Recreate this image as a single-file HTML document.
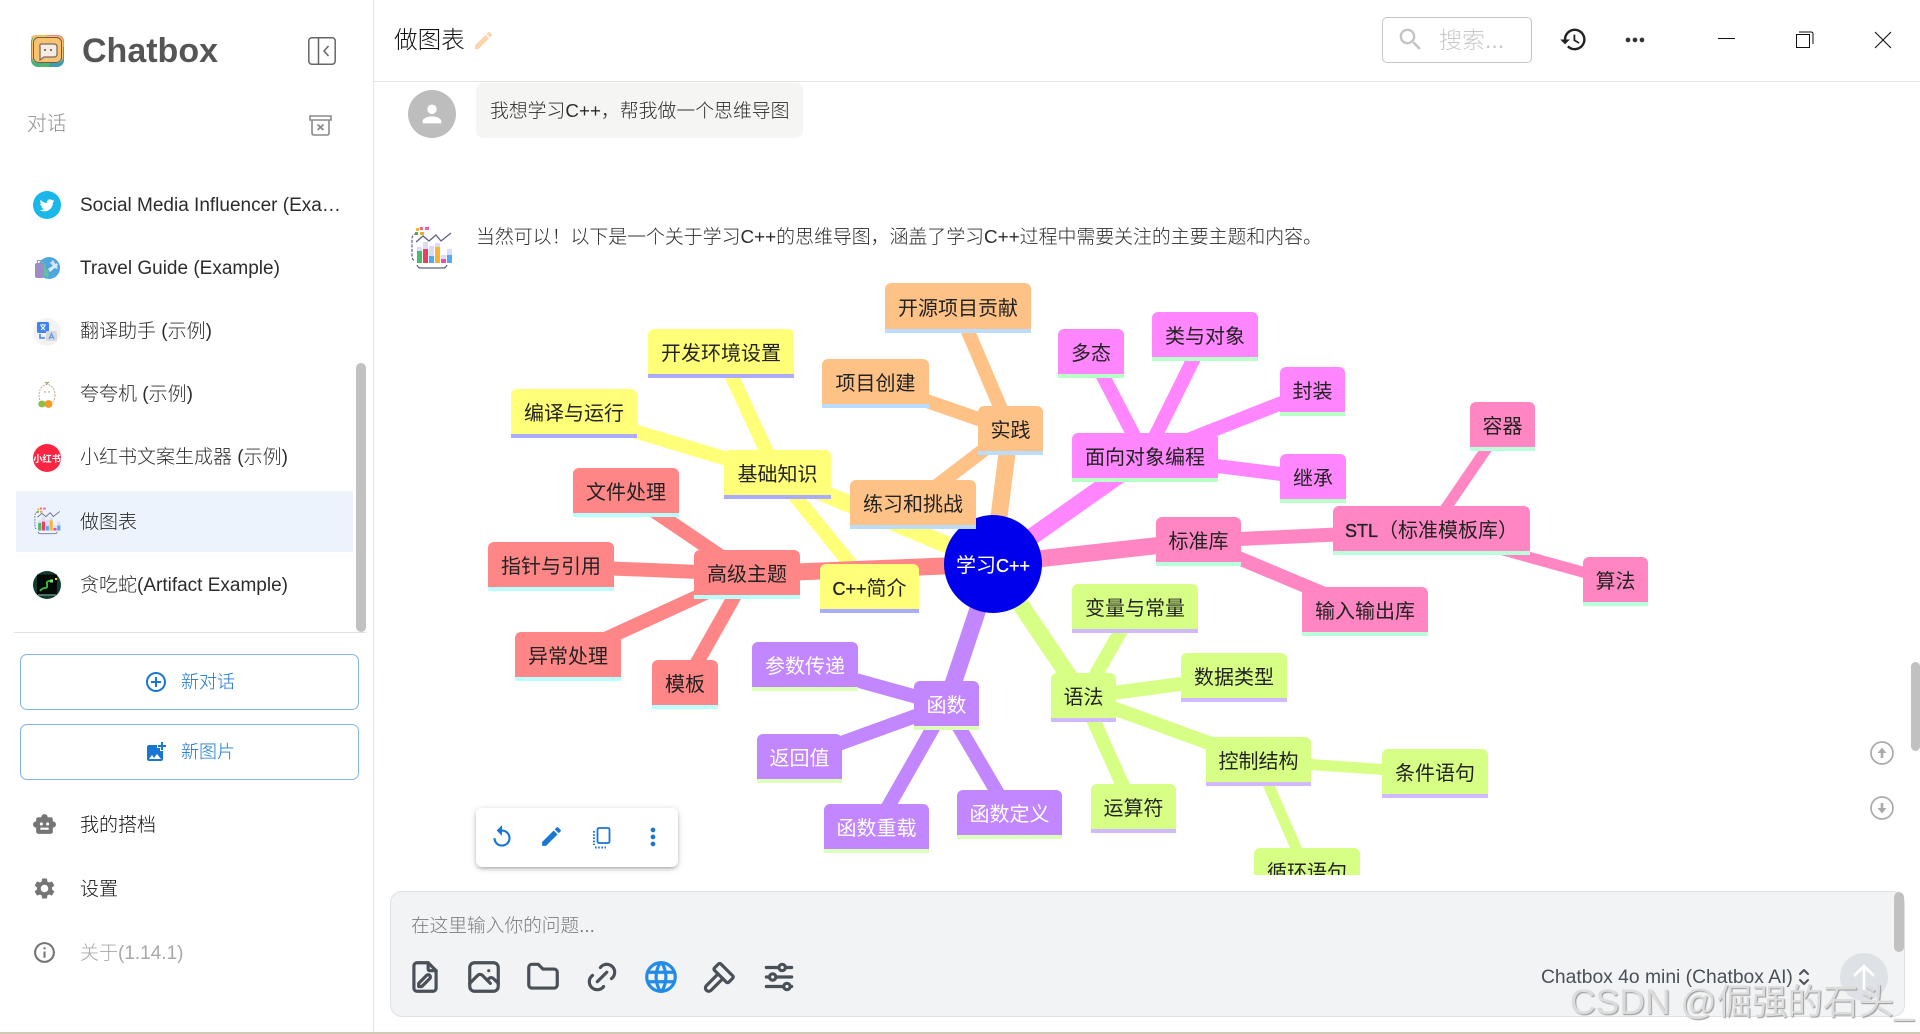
<!DOCTYPE html>
<html lang="zh">
<head>
<meta charset="utf-8">
<title>Chatbox</title>
<style>
*{box-sizing:border-box;margin:0;padding:0}
html,body{width:1920px;height:1034px;overflow:hidden;background:#fff}
body{font-family:"Liberation Sans","Noto Sans CJK SC",sans-serif;color:#333;position:relative}
.a{position:absolute}
.t{position:absolute;white-space:nowrap;font-size:19px;line-height:26px;color:#2c2c2c;font-weight:300}
svg{display:block;overflow:visible}
.sb{position:absolute;background:#c1c1c1;border-radius:5px}
.btn{position:absolute;left:20px;width:339px;height:56px;border:1.3px solid #82b4e6;border-radius:7px}
/* mindmap */
#mm{position:absolute;left:0;top:0;width:1920px;height:875px;overflow:hidden}
.n{position:absolute;border-radius:6px 6px 0 0;text-align:center;font-size:20px;color:#222;white-space:nowrap;border-bottom:4px solid;display:flex;align-items:center;justify-content:center;line-height:26px;padding-top:5px}
.n span{font-size:18px;-webkit-text-stroke:.35px #222}
.y{background:#ffff78;border-color:#acacff}
.o{background:#ffc286;border-color:#b9dcff}
.r{background:#ff8686;border-color:#b9ffff}
.m{background:#ff86ff;border-color:#b9ffc8}
.p{background:#ff86c2;border-color:#b9ffdc}
.g{background:#d7ff86;border-color:#d0b9ff}
.v{background:#c286ff;border-color:#dcffb9;color:#fff}
.e line{stroke-linecap:butt}
</style>
</head>
<body>
<svg width="0" height="0" style="position:absolute">
<symbol id="chart" viewBox="0 0 44 44">
<path d="M8 8 Q3 8 3 13 V30 Q3 34 6 35" fill="none" stroke="#5c5f8a" stroke-width="1.2" stroke-dasharray="3 1.5"/>
<rect x="7" y="2" width="3" height="3" fill="#f7b733"/><rect x="11" y="1" width="3" height="3" fill="#f06292"/><rect x="16" y="1" width="4" height="3" fill="#ec5fb3"/><rect x="6" y="6" width="3" height="3" fill="#4caf50"/><rect x="11" y="6" width="4" height="3" fill="#f9a825"/>
<path d="M7 16 L14 10 L20 15 L27 9 L32 15 L42 7" fill="none" stroke="#5c5f8a" stroke-width="1.3"/>
<rect x="8" y="25" width="5" height="12" fill="#4bb870"/><rect x="8" y="21" width="5" height="4" fill="#dcdcfa"/>
<rect x="14" y="16" width="5" height="7" fill="#dcdcfa"/><rect x="14" y="23" width="5" height="14" fill="#e8415f"/>
<rect x="20" y="20" width="5" height="10" fill="#dcdcfa"/><rect x="20" y="30" width="5" height="7" fill="#54aaf2"/>
<rect x="26" y="17" width="5" height="4" fill="#dcdcfa"/><rect x="26" y="21" width="5" height="16" fill="#f9b233"/>
<rect x="32" y="29" width="5" height="4" fill="#dcdcfa"/><rect x="32" y="33" width="5" height="4" fill="#f04da0"/>
<rect x="38" y="23" width="5" height="6" fill="#dcdcfa"/><rect x="38" y="29" width="5" height="8" fill="#54aaf2"/>
<path d="M8 39 Q9 42 12 42 H34 Q37 42 38 39" fill="none" stroke="#5c5f8a" stroke-width="1.2"/>
</symbol>
</svg>

<!-- sidebar -->
<div class="a" style="left:373px;top:0;width:1px;height:1034px;background:#e4e4e4"></div>

<svg class="a" style="left:31px;top:35px" width="33" height="32" viewBox="0 0 33 32">
<defs><linearGradient id="lb" x1="0" x2="1" y1="0" y2="0"><stop offset="0" stop-color="#43b27f"/><stop offset=".55" stop-color="#57b36c"/><stop offset=".56" stop-color="#3a9db0"/><stop offset="1" stop-color="#3a9db0"/></linearGradient></defs>
<rect width="33" height="32" rx="7" fill="url(#lb)"/>
<path d="M7 0 H17 V3 H0 Q0 0 7 0Z" fill="#f6b95f"/>
<path d="M16 0 H26 Q33 0 33 7 V12 H16Z" fill="#f0896a"/>
<rect x="0" y="0" width="31" height="27" rx="6" fill="#f7c36f" transform="translate(1 1)"/>
<rect x="2.5" y="2.5" width="28" height="25" rx="5" fill="#f7c36f" stroke="#6e5a52" stroke-width="1"/>
<path d="M11 9 H23 Q26 9 26 12 V19 Q26 22 23 22 H13 L9 25 V12 Q8 9 11 9Z" fill="#f7ece2" stroke="#7b6a66" stroke-width="1.3"/>
<circle cx="14" cy="15" r="1.1" fill="#7b6a66"/><circle cx="20" cy="15" r="1.1" fill="#7b6a66"/>
</svg>
<div class="t" style="left:82px;top:31px;font-size:34px;line-height:40px;font-weight:700;color:#555">Chatbox</div>
<svg class="a" style="left:308px;top:37px" width="28" height="28" viewBox="0 0 28 28" fill="none" stroke="#666" stroke-width="1.5"><rect x=".8" y=".8" width="26.4" height="26.4" rx="3"/><path d="M10.5 1V27"/><path d="M20.5 9 L16 14 L20.5 19"/></svg>

<div class="t" style="left:27px;top:111px;font-size:19.8px;color:#8f8f8f">对话</div>
<svg class="a" style="left:309px;top:115px" width="23" height="21" viewBox="0 0 23 21" fill="none" stroke="#8a8a8a" stroke-width="1.6"><path d="M1 1 H22 V5 H1Z"/><path d="M3 5 V18 Q3 20 5 20 H18 Q20 20 20 18 V5"/><path d="M8.5 9.5 L14.5 15 M14.5 9.5 L8.5 15" stroke-width="1.8"/></svg>

<!-- list -->
<div class="a" style="left:16px;top:491px;width:337px;height:61px;background:#ecf3fc"></div>
<svg class="a" style="left:33px;top:190.5px" width="28" height="28" viewBox="0 0 28 28"><circle cx="14" cy="14" r="14" fill="#1ab7ea"/><g transform="translate(5.5 5.5) scale(.71)"><path fill="#fff" d="M22.46,6C21.69,6.35 20.86,6.58 20,6.69C20.88,6.16 21.56,5.32 21.88,4.31C21.05,4.81 20.13,5.16 19.16,5.36C18.37,4.5 17.26,4 16,4C13.65,4 11.73,5.92 11.73,8.29C11.73,8.63 11.77,8.96 11.84,9.27C8.28,9.09 5.11,7.38 3,4.79C2.63,5.42 2.42,6.16 2.42,6.94C2.42,8.43 3.17,9.75 4.33,10.5C3.62,10.5 2.96,10.3 2.38,10C2.38,10 2.38,10 2.38,10.03C2.38,12.11 3.86,13.85 5.82,14.24C5.46,14.34 5.08,14.39 4.69,14.39C4.42,14.39 4.15,14.36 3.89,14.31C4.43,16 6,17.26 7.89,17.29C6.43,18.44 4.58,19.13 2.56,19.13C2.22,19.13 1.88,19.11 1.54,19.07C3.44,20.29 5.7,21 8.12,21C16,21 20.33,14.46 20.33,8.79C20.33,8.6 20.33,8.42 20.32,8.23C21.16,7.63 21.88,6.87 22.46,6Z"/></g></svg>
<div class="t" style="left:80px;top:193px;width:263px;overflow:hidden;text-overflow:ellipsis">Social Media Influencer (Example)</div>

<svg class="a" style="left:33px;top:254px" width="28" height="28" viewBox="0 0 28 28"><circle cx="16" cy="14" r="11" fill="#4fa6dc"/><path d="M9 7 Q14 10 12 14 Q17 17 15 24 Q8 21 6 14Z" fill="#62c0a6"/><path d="M20 6 L25 14 L23 15 L17 9Z" fill="#cfe0fa"/><path d="M15 15 L24 9 L25 11 L17 18Z" fill="#dfe9fc"/><rect x="2" y="9" width="9" height="15" rx="2" fill="#9d8cc6"/><rect x="4.5" y="6.5" width="4" height="3" fill="none" stroke="#9d8cc6"/></svg>
<div class="t" style="left:80px;top:256px">Travel Guide (Example)</div>

<svg class="a" style="left:33px;top:317.5px" width="28" height="28" viewBox="0 0 28 28"><circle cx="14" cy="14" r="14" fill="#f3f3f5"/><rect x="4" y="4" width="12" height="11" rx="1.5" fill="#3f83f0"/><path d="M7 7 H13 M10 6 V7 M8 12 L12 8 M8 8 L12 12" stroke="#fff" stroke-width="1" fill="none"/><rect x="13" y="13" width="11" height="10" rx="1.5" fill="#d9d9dd"/><path d="M16 21 L18.5 15.5 L21 21 M17 19.5 H20" stroke="#5b9bee" stroke-width="1.2" fill="none"/><path d="M7 16 V20 H12" stroke="#3f83f0" stroke-width="1.6" fill="none"/></svg>
<div class="t" style="left:80px;top:319px">翻译助手 (示例)</div>

<svg class="a" style="left:33px;top:381px" width="28" height="28" viewBox="0 0 28 28"><ellipse cx="14" cy="14" rx="8" ry="10.5" fill="#fff" stroke="#b8a48c" stroke-width=".9" stroke-dasharray="2 1"/><path d="M14 3 V1 M12 1 L14 2.5 L16 1" stroke="#8aa35c" stroke-width="1" fill="none"/><circle cx="12" cy="11" r=".7" fill="#9a8370"/><circle cx="16" cy="11" r=".7" fill="#9a8370"/><ellipse cx="9" cy="23" rx="3.8" ry="3.4" fill="#88bf4a"/><circle cx="15.5" cy="23" r="3.9" fill="#f59a23"/></svg>
<div class="t" style="left:80px;top:382px">夸夸机 (示例)</div>

<svg class="a" style="left:33px;top:444px" width="28" height="28" viewBox="0 0 28 28"><circle cx="14" cy="14" r="14" fill="#ff2442"/><text x="14" y="17.8" text-anchor="middle" font-size="9.2" font-weight="700" fill="#fff" font-family="'Noto Sans CJK SC',sans-serif">小红书</text></svg>
<div class="t" style="left:80px;top:445px">小红书文案生成器 (示例)</div>

<svg class="a" style="left:33px;top:507px" width="28" height="28"><use href="#chart" width="28" height="28"/></svg>
<div class="t" style="left:80px;top:510px">做图表</div>

<svg class="a" style="left:33px;top:571px" width="28" height="28" viewBox="0 0 28 28"><circle cx="14" cy="14" r="14" fill="#123b33"/><rect x="4" y="3.5" width="20" height="20" fill="#050a08"/><path d="M7 20 Q9 17 12 17 Q15 17 14 13 Q13 10 17 10" fill="none" stroke="#3bc43b" stroke-width="1.8"/><rect x="17" y="8.5" width="3" height="3" fill="#7be37b"/><rect x="22" y="7" width="2" height="2" fill="#e6e64c"/><path d="M5 24 H23" stroke="#5e8f7e" stroke-width="1.5"/></svg>
<div class="t" style="left:80px;top:573px">贪吃蛇(Artifact Example)</div>

<div class="sb" style="left:356px;top:363px;width:10px;height:269px"></div>
<div class="a" style="left:14px;top:632px;width:352px;height:1px;background:#e0e0e0"></div>

<div class="btn" style="top:654px"></div>
<svg class="a" style="left:144px;top:670px" width="24" height="24" viewBox="0 0 24 24"><path fill="#1976d2" d="M13 7h-2v4H7v2h4v4h2v-4h4v-2h-4V7zm-1-5C6.48 2 2 6.48 2 12s4.48 10 10 10 10-4.48 10-10S17.52 2 12 2zm0 18c-4.41 0-8-3.59-8-8s3.59-8 8-8 8 3.59 8 8-3.59 8-8 8z"/></svg>
<div class="t" style="left:181px;top:669px;font-size:18px;color:#1976d2">新对话</div>

<div class="btn" style="top:724px"></div>
<svg class="a" style="left:144px;top:740px" width="24" height="24" viewBox="0 0 24 24"><path fill="#1976d2" d="M19 7v2.99s-1.99.01-2 0V7h-3s.01-1.99 0-2h3V2h2v3h3v2h-3zm-3 4V8h-3V5H5c-1.1 0-2 .9-2 2v12c0 1.1.9 2 2 2h12c1.1 0 2-.9 2-2v-8h-3zM5 19l3-4 2 3 3-4 4 5H5z"/></svg>
<div class="t" style="left:181px;top:739px;font-size:18px;color:#1976d2">新图片</div>

<svg class="a" style="left:32px;top:811.5px" width="25" height="25" viewBox="0 0 24 24"><path fill="#757575" d="M20 9V7c0-1.1-.9-2-2-2h-3c0-1.66-1.34-3-3-3S9 3.34 9 5H6c-1.1 0-2 .9-2 2v2c-1.66 0-3 1.34-3 3s1.34 3 3 3v4c0 1.1.9 2 2 2h12c1.1 0 2-.9 2-2v-4c1.66 0 3-1.34 3-3s-1.34-3-3-3zM7.5 11.5c0-.83.67-1.5 1.5-1.5s1.5.67 1.5 1.5S9.83 13 9 13s-1.5-.67-1.5-1.5zM16 17H8v-2h8v2zm-1-4c-.83 0-1.5-.67-1.5-1.5S14.17 10 15 10s1.5.67 1.5 1.5S15.83 13 15 13z"/></svg>
<div class="t" style="left:80px;top:813px;color:#111">我的搭档</div>
<svg class="a" style="left:32px;top:876px" width="25" height="25" viewBox="0 0 24 24"><path fill="#757575" d="M19.14 12.94c.04-.3.06-.61.06-.94 0-.32-.02-.64-.07-.94l2.03-1.58c.18-.14.23-.41.12-.61l-1.92-3.32c-.12-.22-.37-.29-.59-.22l-2.39.96c-.5-.38-1.03-.7-1.62-.94l-.36-2.54c-.04-.24-.24-.41-.48-.41h-3.84c-.24 0-.43.17-.47.41l-.36 2.54c-.59.24-1.13.57-1.62.94l-2.39-.96c-.22-.08-.47 0-.59.22L2.74 8.87c-.12.21-.08.47.12.61l2.03 1.58c-.05.3-.09.63-.09.94s.02.64.07.94l-2.03 1.58c-.18.14-.23.41-.12.61l1.92 3.32c.12.22.37.29.59.22l2.39-.96c.5.38 1.03.7 1.62.94l.36 2.54c.05.24.24.41.48.41h3.84c.24 0 .44-.17.47-.41l.36-2.54c.59-.24 1.13-.56 1.62-.94l2.39.96c.22.08.47 0 .59-.22l1.92-3.32c.12-.22.07-.47-.12-.61l-2.01-1.58zM12 15.6c-1.98 0-3.6-1.62-3.6-3.6s1.62-3.6 3.6-3.6 3.6 1.62 3.6 3.6-1.62 3.6-3.6 3.6z"/></svg>
<div class="t" style="left:80px;top:877px;color:#111">设置</div>
<svg class="a" style="left:32px;top:940px" width="25" height="25" viewBox="0 0 24 24"><path fill="#757575" d="M11 7h2v2h-2zm0 4h2v6h-2zm1-9C6.48 2 2 6.48 2 12s4.48 10 10 10 10-4.48 10-10S17.52 2 12 2zm0 18c-4.41 0-8-3.59-8-8s3.59-8 8-8 8 3.59 8 8-3.59 8-8 8z"/></svg>
<div class="t" style="left:80px;top:941px;color:#a8a8a8">关于(1.14.1)</div>

<!-- header -->
<div class="a" style="left:374px;top:81px;width:1546px;height:1px;background:#e4e4e4"></div>
<div class="t" style="left:394px;top:25px;font-size:23.6px;line-height:32px;color:#111">做图表</div>
<svg class="a" style="left:472px;top:29px" width="23" height="23" viewBox="0 0 24 24"><path fill="#fbd4ae" d="M3 17.25V21h3.75L17.81 9.94l-3.75-3.75L3 17.25zM20.71 7.04c.39-.39.39-1.02 0-1.41l-2.34-2.34a.9959.9959 0 00-1.41 0l-1.83 1.83 3.75 3.75 1.83-1.83z"/></svg>
<div class="a" style="left:1382px;top:17px;width:150px;height:46px;border:1.3px solid #c4c4c4;border-radius:5px"></div>
<svg class="a" style="left:1396px;top:25px" width="29" height="29" viewBox="0 0 24 24"><path fill="#c4c4c4" d="M15.5 14h-.79l-.28-.27C15.41 12.59 16 11.11 16 9.5 16 5.91 13.09 3 9.5 3S3 5.91 3 9.5 5.91 16 9.5 16c1.61 0 3.09-.59 4.23-1.57l.27.28v.79l5 4.99L20.49 19l-4.99-5zm-6 0C7.01 14 5 11.99 5 9.5S7.01 5 9.5 5 14 7.01 14 9.5 11.99 14 9.5 14z"/></svg>
<div class="t" style="left:1439px;top:24px;font-size:23px;line-height:32px;color:#c8c8c8">搜索...</div>
<svg class="a" style="left:1559px;top:25px" width="29" height="29" viewBox="0 0 24 24"><path fill="#222" d="M13 3c-4.97 0-9 4.03-9 9H1l3.89 3.89.07.14L9 12H6c0-3.87 3.13-7 7-7s7 3.13 7 7-3.13 7-7 7c-1.93 0-3.68-.79-4.94-2.06l-1.42 1.42C8.27 19.99 10.51 21 13 21c4.97 0 9-4.03 9-9s-4.03-9-9-9zm-1 5v5l4.28 2.54.72-1.21-3.5-2.08V8H12z"/></svg>
<svg class="a" style="left:1621px;top:26px" width="28" height="28" viewBox="0 0 24 24"><path fill="#333" d="M6 10c-1.1 0-2 .9-2 2s.9 2 2 2 2-.9 2-2-.9-2-2-2zm12 0c-1.1 0-2 .9-2 2s.9 2 2 2 2-.9 2-2-.9-2-2-2zm-6 0c-1.1 0-2 .9-2 2s.9 2 2 2 2-.9 2-2-.9-2-2-2z"/></svg>
<div class="a" style="left:1718px;top:38px;width:17px;height:1px;background:#111"></div>
<svg class="a" style="left:1796px;top:31px" width="18" height="18" viewBox="0 0 18 18" fill="none" stroke="#111" stroke-width="1"><rect x=".5" y="3.5" width="13" height="13"/><path d="M3 1 H15 Q17 1 17 3 V13"/></svg>
<svg class="a" style="left:1874px;top:31px" width="18" height="18" viewBox="0 0 18 18" fill="none" stroke="#111" stroke-width="1.1"><path d="M1 1 L17 17 M17 1 L1 17"/></svg>

<!-- messages -->
<div class="a" style="left:408px;top:90px;width:48px;height:48px;border-radius:50%;background:#bdbdbd"></div>
<svg class="a" style="left:418px;top:100px" width="28" height="28" viewBox="0 0 24 24"><path fill="#fff" d="M12 12c2.21 0 4-1.79 4-4s-1.79-4-4-4-4 1.79-4 4 1.79 4 4 4zm0 2c-2.67 0-8 1.34-8 4v2h16v-2c0-2.66-5.33-4-8-4z"/></svg>
<div class="a" style="left:476px;top:83px;width:327px;height:55px;border-radius:7px;background:#f5f5f4"></div>
<div class="t" style="left:490px;top:98px;font-size:18.85px">我想学习C++，帮我做一个思维导图</div>
<svg class="a" style="left:409px;top:226px" width="44" height="44"><use href="#chart" width="44" height="44"/></svg>
<div class="t" style="left:476px;top:225px;font-size:18.9px">当然可以！以下是一个关于学习C++的思维导图，涵盖了学习C++过程中需要关注的主要主题和内容。</div>

<!-- mindmap -->
<div id="mm">
<svg class="a e" style="left:0;top:0" width="1920" height="875">
<g stroke="#ffff78" stroke-width="17"><line x1="993" y1="564" x2="777" y2="474"/></g>
<g stroke="#ffff78" stroke-width="14"><line x1="777" y1="474" x2="721" y2="353"/><line x1="777" y1="474" x2="574" y2="413"/><line x1="777" y1="474" x2="870" y2="588"/></g>
<g stroke="#ffc286" stroke-width="17"><line x1="993" y1="564" x2="1010" y2="430"/></g>
<g stroke="#ffc286" stroke-width="14"><line x1="1010" y1="430" x2="958" y2="308"/><line x1="1010" y1="430" x2="875" y2="383"/><line x1="1010" y1="430" x2="913" y2="504"/></g>
<g stroke="#ff8686" stroke-width="17"><line x1="993" y1="564" x2="747" y2="574"/></g>
<g stroke="#ff8686" stroke-width="14"><line x1="747" y1="574" x2="626" y2="492"/><line x1="747" y1="574" x2="551" y2="566"/><line x1="747" y1="574" x2="568" y2="656"/><line x1="747" y1="574" x2="685" y2="684"/></g>
<g stroke="#ff86ff" stroke-width="17"><line x1="993" y1="564" x2="1145" y2="457"/></g>
<g stroke="#ff86ff" stroke-width="14"><line x1="1145" y1="457" x2="1091" y2="353"/><line x1="1145" y1="457" x2="1205" y2="336"/><line x1="1145" y1="457" x2="1312" y2="391"/><line x1="1145" y1="457" x2="1313" y2="478"/></g>
<g stroke="#ff86c2" stroke-width="17"><line x1="993" y1="564" x2="1198" y2="541"/></g>
<g stroke="#ff86c2" stroke-width="14"><line x1="1198" y1="541" x2="1431" y2="530"/><line x1="1198" y1="541" x2="1365" y2="611"/></g>
<g stroke="#ff86c2" stroke-width="11"><line x1="1431" y1="530" x2="1502" y2="426"/><line x1="1431" y1="530" x2="1615" y2="581"/></g>
<g stroke="#d7ff86" stroke-width="17"><line x1="993" y1="564" x2="1083" y2="697"/></g>
<g stroke="#d7ff86" stroke-width="14"><line x1="1083" y1="697" x2="1134" y2="608"/><line x1="1083" y1="697" x2="1233" y2="677"/><line x1="1083" y1="697" x2="1258" y2="761"/><line x1="1083" y1="697" x2="1133" y2="808"/></g>
<g stroke="#d7ff86" stroke-width="11"><line x1="1258" y1="761" x2="1435" y2="773"/><line x1="1258" y1="761" x2="1307" y2="873"/></g>
<g stroke="#c286ff" stroke-width="17"><line x1="993" y1="564" x2="946" y2="705"/></g>
<g stroke="#c286ff" stroke-width="14"><line x1="946" y1="705" x2="805" y2="666"/><line x1="946" y1="705" x2="800" y2="758"/><line x1="946" y1="705" x2="876" y2="828"/><line x1="946" y1="705" x2="1010" y2="814"/></g>
<circle cx="993" cy="564" r="49" fill="#0000ec"/>
</svg>
<div class="t" style="left:993px;top:553px;transform:translateX(-50%);font-size:20px;color:#fff;font-weight:400">学习<span style="font-size:18px;-webkit-text-stroke:.35px #fff">C++</span></div>

<div class="n o" style="left:885px;top:283px;width:146px;height:50px">开源项目贡献</div>
<div class="n y" style="left:648px;top:329px;width:146px;height:49px">开发环境设置</div>
<div class="n o" style="left:822px;top:359px;width:107px;height:49px">项目创建</div>
<div class="n y" style="left:511px;top:389px;width:126px;height:49px">编译与运行</div>
<div class="n o" style="left:978px;top:406px;width:65px;height:49px">实践</div>
<div class="n y" style="left:724px;top:450px;width:107px;height:49px">基础知识</div>
<div class="n o" style="left:850px;top:480px;width:126px;height:49px">练习和挑战</div>
<div class="n r" style="left:573px;top:468px;width:106px;height:49px">文件处理</div>
<div class="n r" style="left:488px;top:542px;width:126px;height:49px">指针与引用</div>
<div class="n r" style="left:694px;top:550px;width:106px;height:49px">高级主题</div>
<div class="n y" style="left:820px;top:564px;width:99px;height:49px"><span>C++</span>简介</div>
<div class="n m" style="left:1058px;top:329px;width:66px;height:49px">多态</div>
<div class="n m" style="left:1152px;top:312px;width:106px;height:49px">类与对象</div>
<div class="n m" style="left:1280px;top:367px;width:65px;height:49px">封装</div>
<div class="n m" style="left:1072px;top:433px;width:146px;height:49px">面向对象编程</div>
<div class="n m" style="left:1280px;top:454px;width:66px;height:49px">继承</div>
<div class="n p" style="left:1470px;top:402px;width:65px;height:49px">容器</div>
<div class="n p" style="left:1333px;top:506px;width:197px;height:49px"><span>STL</span>（标准模板库）</div>
<div class="n p" style="left:1156px;top:517px;width:85px;height:49px">标准库</div>
<div class="n p" style="left:1302px;top:587px;width:126px;height:49px">输入输出库</div>
<div class="n p" style="left:1583px;top:557px;width:65px;height:49px">算法</div>
<div class="n g" style="left:1072px;top:584px;width:126px;height:49px">变量与常量</div>
<div class="n r" style="left:515px;top:632px;width:106px;height:49px">异常处理</div>
<div class="n r" style="left:652px;top:660px;width:66px;height:49px">模板</div>
<div class="n v" style="left:752px;top:642px;width:106px;height:49px">参数传递</div>
<div class="n v" style="left:914px;top:681px;width:65px;height:49px">函数</div>
<div class="n v" style="left:757px;top:734px;width:85px;height:49px">返回值</div>
<div class="n v" style="left:824px;top:804px;width:105px;height:49px">函数重载</div>
<div class="n v" style="left:957px;top:790px;width:105px;height:49px">函数定义</div>
<div class="n g" style="left:1181px;top:653px;width:106px;height:49px">数据类型</div>
<div class="n g" style="left:1051px;top:673px;width:65px;height:49px">语法</div>
<div class="n g" style="left:1206px;top:737px;width:105px;height:49px">控制结构</div>
<div class="n g" style="left:1382px;top:749px;width:106px;height:49px">条件语句</div>
<div class="n g" style="left:1091px;top:784px;width:85px;height:49px">运算符</div>
<div class="n g" style="left:1254px;top:848px;width:106px;height:49px">循环语句</div>
</div>

<!-- toolbar -->
<div class="a" style="left:476px;top:808px;width:202px;height:59px;background:#fff;border-radius:6px;box-shadow:0 2px 4px -1px rgba(0,0,0,.35),0 1px 8px rgba(0,0,0,.12)"></div>
<svg class="a" style="left:488px;top:823px" width="28" height="28" viewBox="0 0 24 24"><path fill="#1976d2" transform="translate(12 12) scale(.92) translate(-12 -12)" d="M12 5V1L7 6l5 5V7c3.31 0 6 2.69 6 6s-2.69 6-6 6-6-2.69-6-6H4c0 4.42 3.58 8 8 8s8-3.58 8-8-3.58-8-8-8z"/></svg>
<svg class="a" style="left:539px;top:824px" width="25" height="25" viewBox="0 0 24 24"><path fill="#1976d2" d="M3 17.25V21h3.75L17.81 9.94l-3.75-3.75L3 17.25zM20.71 7.04c.39-.39.39-1.02 0-1.41l-2.34-2.34a.9959.9959 0 00-1.41 0l-1.83 1.83 3.75 3.75 1.83-1.83z"/></svg>
<svg class="a" style="left:592px;top:827px" width="20" height="22" viewBox="0 0 20 22" fill="none" stroke="#1976d2"><rect x="5.5" y="1" width="12" height="15" rx="1.5" stroke-width="1.8"/><path d="M2 4 V18 M3 20.5 H14" stroke-width="2" stroke-dasharray="1.6 1.6"/></svg>
<svg class="a" style="left:639px;top:823px" width="28" height="28" viewBox="0 0 24 24"><path fill="#1976d2" d="M12 8c1.1 0 2-.9 2-2s-.9-2-2-2-2 .9-2 2 .9 2 2 2zm0 2c-1.1 0-2 .9-2 2s.9 2 2 2 2-.9 2-2-.9-2-2-2zm0 6c-1.1 0-2 .9-2 2s.9 2 2 2 2-.9 2-2-.9-2-2-2z"/></svg>

<!-- right controls -->
<div class="sb" style="left:1911px;top:662px;width:9px;height:89px"></div>
<svg class="a" style="left:1870px;top:741px" width="24" height="24" viewBox="0 0 24 24"><circle cx="12" cy="12" r="11" fill="none" stroke="#aaa" stroke-width="1.7"/><path fill="#aaa" d="M12 6.5 L16.5 12 H13.3 V17 H10.7 V12 H7.5Z"/></svg>
<svg class="a" style="left:1870px;top:796px" width="24" height="24" viewBox="0 0 24 24"><circle cx="12" cy="12" r="11" fill="none" stroke="#aaa" stroke-width="1.7"/><path fill="#aaa" d="M12 17.5 L16.5 12 H13.3 V7 H10.7 V12 H7.5Z"/></svg>

<!-- input -->
<div class="a" style="left:390px;top:891px;width:1515px;height:126px;background:#f1f3f5;border:1px solid #dee2e6;border-radius:12px"></div>
<div class="sb" style="left:1894px;top:892px;width:10px;height:60px"></div>
<div class="t" style="left:411px;top:913px;color:#7c7c7c;font-size:18.7px">在这里输入你的问题...</div>
<svg class="a" style="left:406px;top:958px" width="38" height="38" viewBox="0 0 24 24" fill="none" stroke="#495057" stroke-width="2" stroke-linecap="round" stroke-linejoin="round"><path d="M14 3v4a1 1 0 0 0 1 1h4"/><path d="M17 21h-10a2 2 0 0 1 -2 -2v-14a2 2 0 0 1 2 -2h7l5 5v11a2 2 0 0 1 -2 2z"/><path d="M10 18l5 -5a1.414 1.414 0 0 0 -2 -2l-5 5v2h2z"/></svg>
<svg class="a" style="left:465px;top:958px" width="38" height="38" viewBox="0 0 24 24" fill="none" stroke="#495057" stroke-width="2" stroke-linecap="round" stroke-linejoin="round"><path d="M15 8h.01"/><path d="M3 6a3 3 0 0 1 3 -3h12a3 3 0 0 1 3 3v12a3 3 0 0 1 -3 3h-12a3 3 0 0 1 -3 -3v-12z"/><path d="M3 16l5 -5c.928 -.893 2.072 -.893 3 0l5 5"/><path d="M14 14l1 -1c.928 -.893 2.072 -.893 3 0l3 3"/></svg>
<svg class="a" style="left:524px;top:958px" width="38" height="38" viewBox="0 0 24 24" fill="none" stroke="#495057" stroke-width="2" stroke-linecap="round" stroke-linejoin="round"><path d="M5 4h4l3 3h7a2 2 0 0 1 2 2v8a2 2 0 0 1 -2 2h-14a2 2 0 0 1 -2 -2v-11a2 2 0 0 1 2 -2"/></svg>
<svg class="a" style="left:583px;top:958px" width="38" height="38" viewBox="0 0 24 24" fill="none" stroke="#495057" stroke-width="2" stroke-linecap="round" stroke-linejoin="round"><path d="M9 15l6 -6"/><path d="M11 6l.463 -.536a5 5 0 0 1 7.071 7.072l-.534 .464"/><path d="M13 18l-.397 .534a5.068 5.068 0 0 1 -7.127 0a4.972 4.972 0 0 1 0 -7.071l.524 -.463"/></svg>
<svg class="a" style="left:642px;top:958px" width="38" height="38" viewBox="0 0 24 24" fill="none" stroke="#228be6" stroke-width="2" stroke-linecap="round" stroke-linejoin="round"><path d="M3 12a9 9 0 1 0 18 0a9 9 0 0 0 -18 0"/><path d="M3.6 9h16.8"/><path d="M3.6 15h16.8"/><path d="M11.5 3a17 17 0 0 0 0 18"/><path d="M12.5 3a17 17 0 0 1 0 18"/></svg>
<svg class="a" style="left:700px;top:958px" width="38" height="38" viewBox="0 0 24 24" fill="none" stroke="#495057" stroke-width="2" stroke-linecap="round" stroke-linejoin="round"><path d="M11.414 10l-7.383 7.418a2.091 2.091 0 0 0 0 2.967a2.11 2.11 0 0 0 2.976 0l7.407 -7.385"/><path d="M18.121 15.293l2.586 -2.586a1 1 0 0 0 0 -1.414l-7.586 -7.586a1 1 0 0 0 -1.414 0l-2.586 2.586a1 1 0 0 0 0 1.414l7.586 7.586a1 1 0 0 0 1.414 0z"/></svg>
<svg class="a" style="left:760px;top:958px" width="38" height="38" viewBox="0 0 24 24" fill="none" stroke="#495057" stroke-width="2" stroke-linecap="round" stroke-linejoin="round"><path d="M14 6m-2 0a2 2 0 1 0 4 0a2 2 0 1 0 -4 0"/><path d="M4 6l8 0"/><path d="M16 6l4 0"/><path d="M8 12m-2 0a2 2 0 1 0 4 0a2 2 0 1 0 -4 0"/><path d="M4 12l2 0"/><path d="M10 12l10 0"/><path d="M17 18m-2 0a2 2 0 1 0 4 0a2 2 0 1 0 -4 0"/><path d="M4 18l11 0"/><path d="M19 18l1 0"/></svg>
<div class="t" style="left:1541px;top:965px;color:#495057;font-size:19.3px;font-weight:400">Chatbox 4o mini (Chatbox AI)</div>
<svg class="a" style="left:1792px;top:965px" width="24" height="24" viewBox="0 0 24 24" fill="none" stroke="#495057" stroke-width="2" stroke-linecap="round" stroke-linejoin="round"><path d="M8 9l4 -4l4 4"/><path d="M16 15l-4 4l-4 -4"/></svg>
<div class="a" style="left:1840px;top:953px;width:48px;height:48px;border-radius:50%;background:#dee2e6"></div>
<svg class="a" style="left:1850px;top:963px" width="28" height="28" viewBox="0 0 28 28" fill="none" stroke="#fff" stroke-width="2.6"><path d="M14 27 V3 M4 13 L14 3 L24 13"/></svg>
<div class="t" style="left:1570px;top:980px;font-size:35.5px;line-height:44px;color:#dcdcdc;font-weight:400;text-shadow:1px 1px 1px #999">CSDN @倔强的石头_</div>

<div class="a" style="left:0;top:1032px;width:1920px;height:1.5px;background:#d2c9b5"></div>
</body>
</html>
